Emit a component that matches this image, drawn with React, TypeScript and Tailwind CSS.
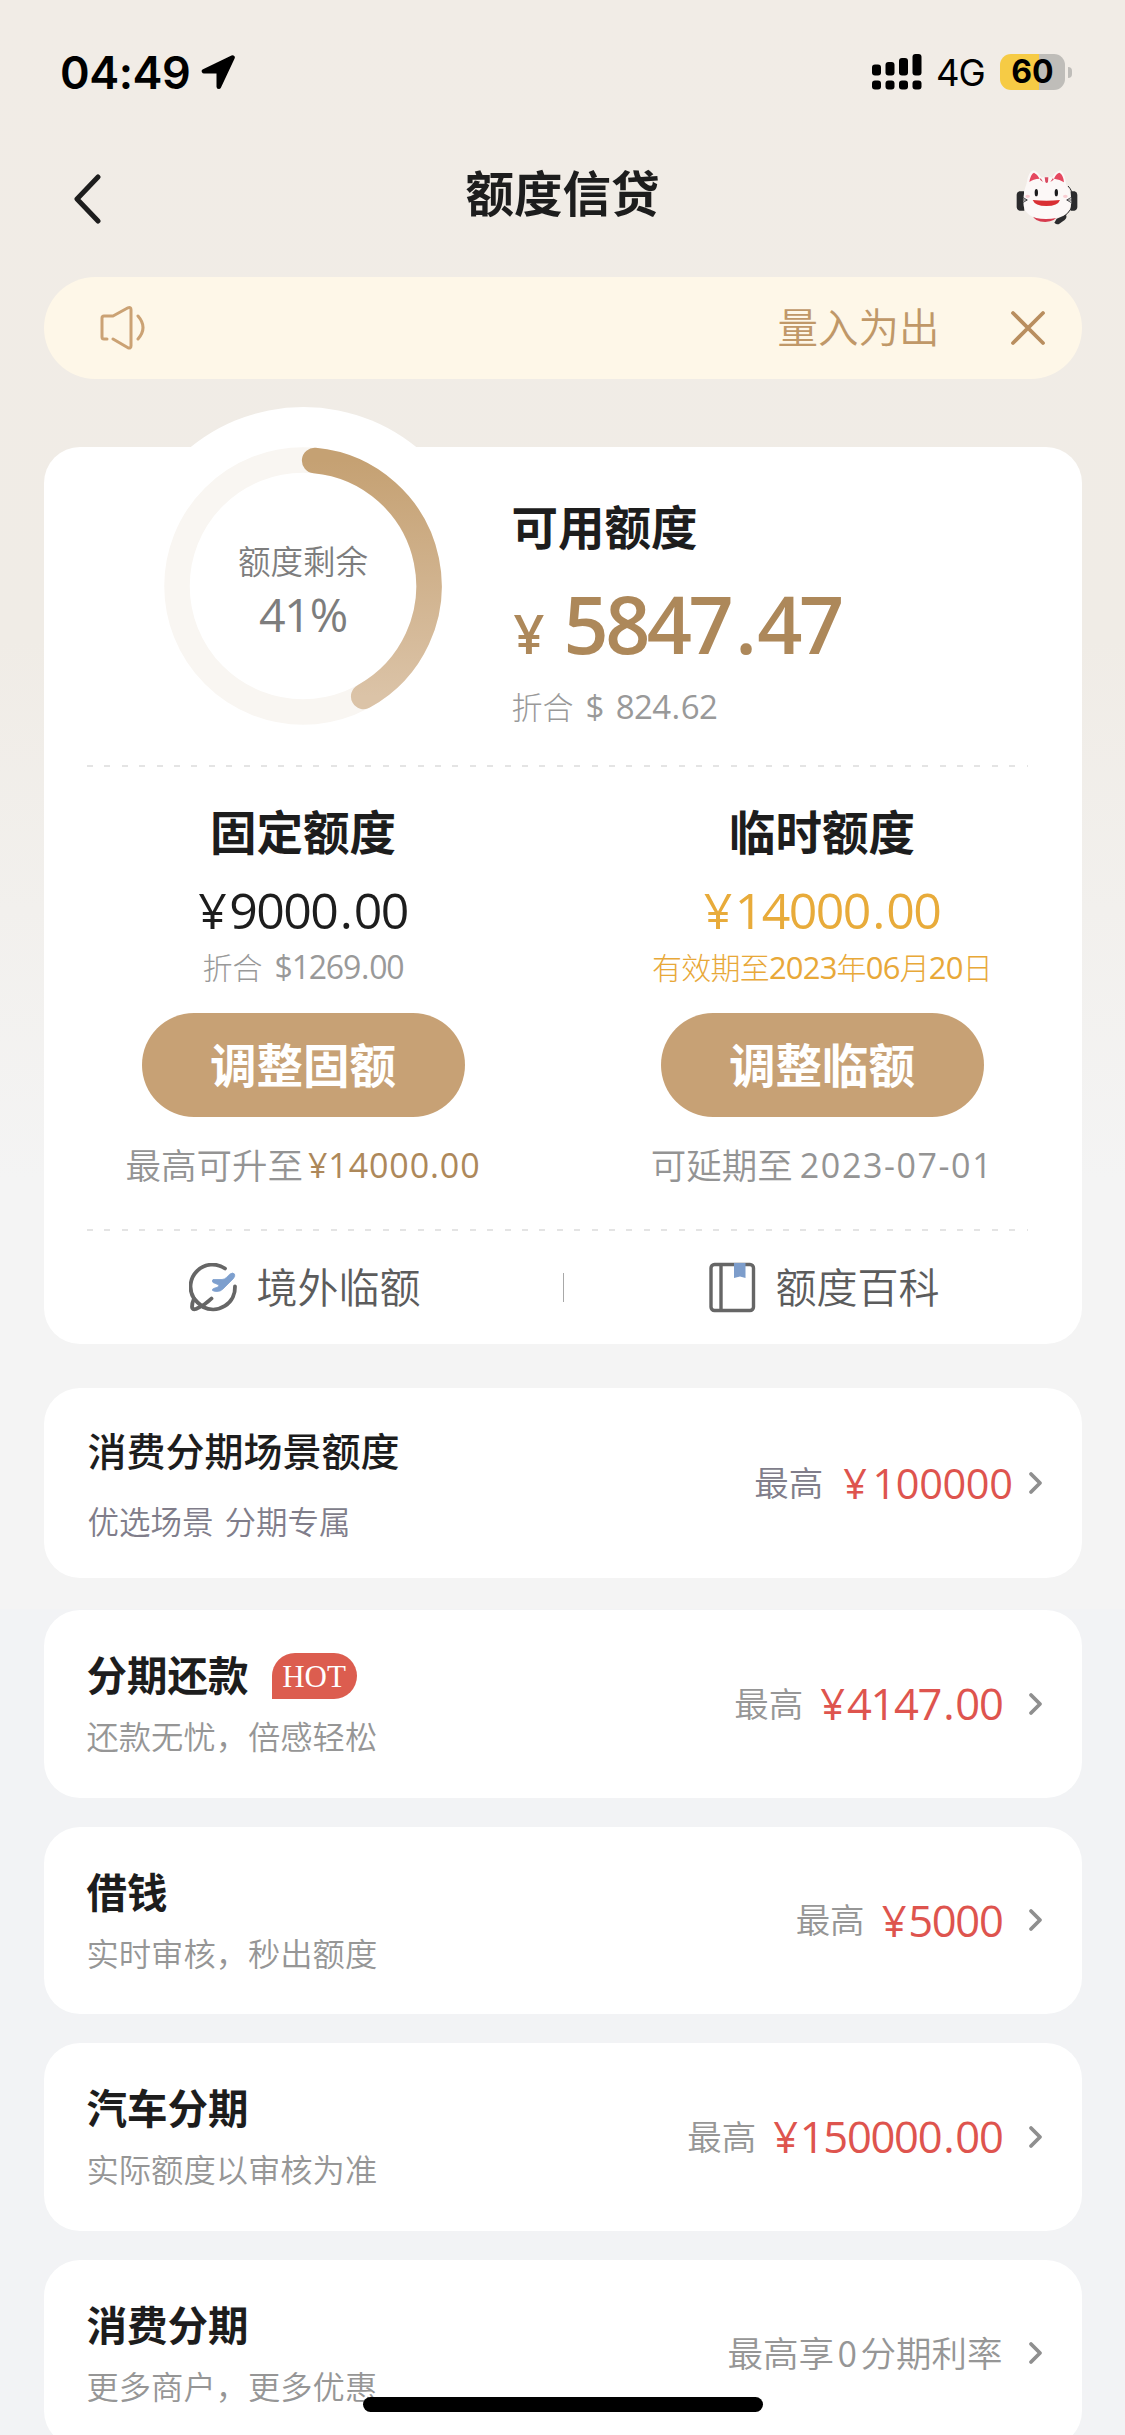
import type { ReactNode } from "react";
import clsx from "clsx";

interface Offer {
  title: string;
  desc: string;
  hot?: boolean;
  amount?: string;
  note?: ReactNode;
}

const offers: Offer[] = [
  { title: "分期还款", desc: "还款无忧，倍感轻松", hot: true, amount: "¥4147.00" },
  { title: "借钱", desc: "实时审核，秒出额度", amount: "¥5000" },
  { title: "汽车分期", desc: "实际额度以审核为准", amount: "¥150000.00" },
  {
    title: "消费分期",
    desc: "更多商户，更多优惠",
    note: (
      <>
        最高享<span className="mx-[3.5px]">0</span>分期利率
      </>
    ),
  },
];

// Ring geometry: progress is drawn clockwise from the top with rounded ends
const RING_R = 126;
const START_DEG = 5.3;
const END_DEG = 151.2;

function ringPoint(deg: number) {
  const rad = (deg * Math.PI) / 180;
  return `${139 + RING_R * Math.sin(rad)} ${139 - RING_R * Math.cos(rad)}`;
}

interface FiguresProps {
  value: string;
  className?: string;
  // spacing round the decimal point and after the currency sign
  dot?: string;
  sign?: string;
}

function Figures({ value, className, dot, sign }: FiguresProps) {
  const symbol = /^[¥$]/.test(value) ? value[0] : "";
  const [whole, cents] = value.slice(symbol.length).split(".");
  return (
    <span className={clsx("font-['Open_Sans','Noto_Sans_CJK_SC',sans-serif] whitespace-nowrap", className)}>
      {symbol && <span className={sign}>{symbol}</span>}
      {whole}
      {cents && <span className={dot}>.</span>}
      {cents}
    </span>
  );
}

function StatusBar() {
  return (
    <div className="flex h-[144px] items-center justify-between pl-[60px] pr-[53px] font-['Inter',sans-serif] text-black">
      <div className="flex items-center gap-[11px]">
        <span className="text-[45px] font-semibold leading-none tracking-[-0.5px]">04:49</span>
        <svg className="h-[35px] w-[35px]" viewBox="0 0 35 35">
          <path
            d="M31.5 2.5 3 16.2h14.8v15.6z"
            fill="#000"
            stroke="#000"
            strokeWidth="4.6"
            strokeLinejoin="round"
          />
        </svg>
      </div>
      <div className="flex items-center">
        <svg className="h-[36px] w-[50px]" viewBox="0 0 50 36">
          <rect x="0" y="10.5" width="9" height="11" rx="3" />
          <rect x="13.5" y="8" width="9" height="13.5" rx="3" />
          <rect x="27" y="4" width="9" height="17.5" rx="3" />
          <rect x="40.5" y="0" width="9" height="21.5" rx="3" />
          <rect x="0" y="26.5" width="9" height="9" rx="3" />
          <rect x="13.5" y="26.5" width="9" height="9" rx="3" />
          <rect x="27" y="26.5" width="9" height="9" rx="3" />
          <rect x="40.5" y="26.5" width="9" height="9" rx="3" />
        </svg>
        <span className="ml-[14px] w-[64px] pt-[2px] text-[36.5px] leading-none tracking-[-1px]">4G</span>
        <div className="flex h-[36px] w-[65px] items-center justify-center rounded-[11px] bg-[linear-gradient(90deg,#f6cb45_60%,#bfbdb9_60%)]">
          <span className="text-[32px] font-bold leading-none">60</span>
        </div>
        <div className="ml-[3px] h-[11px] w-[4px] rounded-r-full bg-[#bfbdb9]" />
      </div>
    </div>
  );
}

function CatAvatar() {
  return (
    <svg className="mt-[4px] h-[55px] w-[62px]" viewBox="48 60 186 165">
      <path d="M72 124H58q-8 3-8 10v38q1 9 9 10h14zM212 124h12q8 3 8 10v38q-1 9-9 10h-11z" fill="#2b2b2d" />
      <path d="M98 196h74q-4 18-36 20-34-1-38-20" fill="#d63b4e" />
      <path
        d="M80 100Q84 66 100 61q14 4 24 22 16-5 33 0 8-18 24-22 14 8 17 42 18 26 16 56-6 48-76 48-68 0-68-50 0-32 10-57"
        fill="#fcf8f7"
      />
      <path d="M88 96q4-24 14-28 12 6 17 18-20 1-31 10M162 86q6-15 16-18 12 6 14 29-12-9-30-11" fill="#e5485f" />
      <path d="M134 82h11l-1 14q-4 6-8 0zM122 84l7 12-9-7zM159 84l-8 12 10-7z" fill="#d94a60" />
      <ellipse cx="109" cy="128" rx="5" ry="11" fill="#1b1b1d" />
      <ellipse cx="169" cy="128" rx="5" ry="11" fill="#1b1b1d" />
      <ellipse cx="83" cy="139" rx="7" ry="5" fill="#f9cdd2" />
      <ellipse cx="196" cy="139" rx="7" ry="5" fill="#f9cdd2" />
      <path d="M98 150q42 5 82 0-6 18-41 18-34 0-41-18" fill="#d92f33" />
      <path d="m68 142 14 8-14 8M66 150h15M214 142l-14 8 14 8M216 150h-15" fill="none" stroke="#3a3a3c" strokeWidth="2.5" />
      <path d="M204 108q14 14 16 38 1 34-32 56" fill="none" stroke="#2b2b2d" strokeWidth="3" />
      <path d="m170 206 28-12q4 8-4 16l-18 13q-12 0-12-6z" fill="#2b2b2d" />
    </svg>
  );
}

function Chevron() {
  return (
    <svg className="h-[24px] w-[16px] shrink-0" viewBox="0 0 16 24">
      <path d="m3 3 9 9-9 9" fill="none" stroke="#8f8f8f" strokeWidth="3.8" strokeLinecap="round" strokeLinejoin="round" />
    </svg>
  );
}

function NoticeBar() {
  return (
    <div className="mx-[43.5px] flex h-[102px] items-center rounded-full bg-[#fef7e8] pl-[56px] pr-[36px] text-[#c09868]">
      <svg className="h-[44px] w-[48px]" viewBox="0 0 48 44" fill="none" stroke="#cba274" strokeWidth="3" strokeLinecap="round" strokeLinejoin="round">
        <path d="M7 33H4q-2 0-2-2V12q0-2 2-2h9L28 1.800q3-1 3 2v36q0 3-3 2L13 33" />
        <path d="M38 10q10 11.500 0 23" />
      </svg>
      <span className="ml-auto pb-[3px] text-[40.500px] font-[350] leading-none">量入为出</span>
      <svg className="ml-[70px] h-[36px] w-[36px]" viewBox="0 0 36 36">
        <path d="m3 3 30 30M33 3 3 33" stroke="#b98e5f" strokeWidth="3.8" strokeLinecap="round" />
      </svg>
    </div>
  );
}

function QuotaRing() {
  return (
    <div className="-mt-[40px] flex h-[357px] w-[357px] items-center justify-center rounded-full bg-white">
      <div className="relative flex h-[278px] w-[278px] flex-col items-center pt-[96px]">
        <svg className="absolute inset-0" viewBox="0 0 278 278" fill="none" strokeWidth="25.5">
          <defs>
            <linearGradient id="quota" x1="0" y1="0" x2="0" y2="1">
              <stop offset="0" stopColor="#c5a173" />
              <stop offset="1" stopColor="#dbc3a7" />
            </linearGradient>
          </defs>
          <circle cx="139" cy="139" r={RING_R} stroke="#f9f6f2" />
          <path
            d={`M${ringPoint(START_DEG)} A${RING_R} ${RING_R} 0 0 1 ${ringPoint(END_DEG)}`}
            stroke="url(#quota)"
            strokeLinecap="round"
          />
        </svg>
        <span className="text-[32.5px] font-[350] leading-[34px] text-[#7d7d7d]">额度剩余</span>
        <span className="mt-[14px] font-['Open_Sans',sans-serif] text-[46.5px] leading-[46px] tracking-[-1.2px] text-[#7d7d7d]">
          41%
        </span>
      </div>
    </div>
  );
}

function Dashes() {
  return (
    <div className="ml-[43px] h-[2px] w-[941px] bg-[repeating-linear-gradient(90deg,#e4e4e4_0_6px,transparent_6px_17.4px)]" />
  );
}

function QuotaColumn({ title, action, children, note }: { title: string; action: string; children: ReactNode; note: ReactNode }) {
  return (
    <div className="flex w-1/2 flex-col items-center">
      <h2 className="mb-[34px] mt-[40px] text-[46.5px] font-bold leading-[46px] text-[#1d1d1d]">{title}</h2>
      {children}
      <button className="mt-[31px] h-[104px] w-[323px] rounded-full bg-[#c7a175] pb-[4px] text-[46.5px] font-bold leading-none text-white">
        {action}
      </button>
      <div className="mt-[28px] flex h-[40px] items-center text-[35.5px] font-[350] leading-none text-[#949494]">{note}</div>
    </div>
  );
}

function QuotaCard() {
  return (
    <section className="mx-[43.5px] mt-[68.5px] h-[897px] rounded-[36px] bg-white">
      <div className="flex h-[318px]">
        <div className="w-[468px] pl-[81px]">
          <QuotaRing />
        </div>
        <div className="flex flex-col items-start">
          <h2 className="mt-[55px] text-[46.5px] font-bold leading-[46px] text-[#1d1d1d]">可用额度</h2>
          <div className="mt-[36px] flex h-[80px] items-baseline text-[#ad885a]">
            <span className="ml-[2px] w-[50px] font-['Open_Sans',sans-serif] text-[54px] font-semibold leading-[80px]">¥</span>
            <Figures value="5847.47" className="text-[79px] font-semibold leading-[80px] tracking-[-3.500px]" dot="ml-[5px] mr-[4px]" />
          </div>
          <div className="mt-[25px] flex h-[34px] items-center text-[31px] font-light leading-none text-[#999]">
            <span className="pb-[2px]">折合</span>
            <Figures value="$824.62" className="ml-[12px] text-[33px] font-normal tracking-[-0.6px]" dot="mx-[1px]" sign="mr-[12px]" />
          </div>
        </div>
      </div>
      <Dashes />
      <div className="flex h-[462px]">
        <QuotaColumn
          title="固定额度"
          action="调整固额"
          note={
            <>
              <span className="pb-[2px]">最高可升至</span>
              <Figures value="¥14000.00" className="ml-[5px] text-[34px] font-normal tracking-[0.900px] text-[#ad885a]" />
            </>
          }
        >
          <Figures
            value="¥9000.00"
            className="text-[50px] leading-[46px] tracking-[-1.6px] text-[#1d1d1d]"
            dot="mx-[2.5px]"
            sign="mr-[4px]"
          />
          <div className="mt-[19px] flex h-[30px] items-center text-[30px] font-light leading-none text-[#999]">
            <span className="pb-[2px]">折合</span>
            <Figures value="$1269.00" className="ml-[12px] text-[32px] font-normal tracking-[-1.2px]" dot="mx-[1px]" />
          </div>
        </QuotaColumn>
        <QuotaColumn
          title="临时额度"
          action="调整临额"
          note={
            <>
              <span className="pb-[2px]">可延期至</span>
              <span className="ml-[7px] font-['Open_Sans',sans-serif] text-[34px] font-normal tracking-[1.600px]">2023-07-01</span>
            </>
          }
        >
          <Figures
            value="¥14000.00"
            className="text-[50px] leading-[46px] tracking-[-1.6px] text-[#e8ab3a]"
            dot="mx-[2.5px]"
            sign="mr-[4px]"
          />
          <div className="mt-[19px] flex h-[30px] items-center font-light leading-none tracking-[-0.8px] text-[#e8a838]">
            <p className="text-[30px] leading-[30px]">
              有效期至
              <Figures value="2023" className="text-[31px] font-normal leading-none" />年
              <Figures value="06" className="text-[31px] font-normal leading-none" />月
              <Figures value="20" className="text-[31px] font-normal leading-none" />日
            </p>
          </div>
        </QuotaColumn>
      </div>
      <Dashes />
      <div className="flex h-[113px] items-center text-[41px] font-[350] leading-none text-[#5c5c5c]">
        <div className="flex w-[519px] items-center pl-[145px]">
          <svg className="h-[50px] w-[50px]" viewBox="0 0 50 50" fill="none" stroke="#666" strokeWidth="3.8" strokeLinecap="round" strokeLinejoin="round">
            <path d="M36 5.5A22 22 0 0 0 5 35.5Q3 40 3 44q0 3 4 2 9-4 15.5-10.500" />
            <path d="M5 35.5q3 4 9 8.5A22 22 0 0 0 46 23.5" />
            <path
              d="M41 11q3-2 4.500 0 1 2-1 4.500L34 26q-2.500 2.500-6 2.500-3 0-4.500-1-.5-1.500 1-2l4.500-1.500 1-2-6-2.500q-1.500-1.500 0-3h9q2.500 0 4.500-2z"
              fill="#7d9fce"
              stroke="#7d9fce"
              strokeWidth="0.8"
            />
          </svg>
          <span className="ml-[18px] pb-[5px]">境外临额</span>
        </div>
        <div className="h-[29px] w-px bg-[#a8a8a8]" />
        <div className="flex items-center pl-[145px]">
          <svg className="h-[51px] w-[47px]" viewBox="0 0 47 51" fill="none" stroke="#666" strokeWidth="3.4">
            <rect x="2" y="2.5" width="42.5" height="46" rx="3.5" />
            <path d="M12 2.5v46" />
            <path d="M25 1h11.500v15L31 14.500 25 16z" fill="#7d9dcb" stroke="none" />
          </svg>
          <span className="ml-[20px] pb-[5px]">额度百科</span>
        </div>
      </div>
    </section>
  );
}

function SceneCard() {
  return (
    <section className="mx-[43.5px] mt-[44px] flex h-[190px] items-center rounded-[36px] bg-white pl-[44px] pr-[38px] text-[#807d8a]">
      <div className="flex-1">
        <h3 className="text-[39px] font-medium leading-[40px] text-[#1d1d1d]">消费分期场景额度</h3>
        <p className="mt-[34px] text-[31.5px] font-[350] leading-[34px]">
          优选场景<span className="ml-[11px]">分期专属</span>
        </p>
      </div>
      <span className="pb-[2px] text-[34.5px] font-[350]">最高</span>
      <Figures
        value="¥100000"
        className="ml-[20px] mr-[15px] text-[41.5px] tracking-[-0.4px] text-[#de544e]"
        sign="mr-[6px]"
      />
      <Chevron />
    </section>
  );
}

function OfferCard({ offer }: { offer: Offer }) {
  return (
    <section className="flex h-[187.5px] shrink-0 items-center rounded-[36px] bg-white pl-[43px] pr-[38px] text-[#969696]">
      <div className="flex-1 pb-[2px]">
        <div className="flex h-[46px] items-center">
          <h3 className="pb-[4px] text-[40.5px] font-bold leading-none text-[#1d1d1d]">{offer.title}</h3>
          {offer.hot && (
            <span className="ml-[23px] flex h-[46px] w-[85px] items-center justify-center rounded-[23px] rounded-bl-none bg-[#dc5d4f] font-['Liberation_Serif',serif] text-[31px] leading-none text-white">
              HOT
            </span>
          )}
        </div>
        <p className="mt-[19px] text-[32.3px] font-[350] leading-[34px]">{offer.desc}</p>
      </div>
      {offer.amount ? (
        <>
          <span className="pb-[2px] text-[34.5px] font-[350]">最高</span>
          <Figures
            value={offer.amount}
            className="ml-[17px] text-[43.5px] tracking-[-1.3px] text-[#de544e]"
            dot="mx-[2px]"
            sign="mr-[3px]"
          />
        </>
      ) : (
        <span className="pb-[3px] text-[35.500px] font-[350]">{offer.note}</span>
      )}
      <div className="ml-[25px] flex">
        <Chevron />
      </div>
    </section>
  );
}

export default function App() {
  return (
    <div className="relative h-[2435px] w-[1125px] overflow-hidden bg-[#f2f3f5] font-['Noto_Sans_CJK_SC',sans-serif]">
      <div className="h-[1609px] bg-[linear-gradient(180deg,#f1ece6_0,#f0ece6_640px,#f4f4f4_1180px)]">
        <StatusBar />
        <header className="flex h-[132.5px] items-start justify-between pl-[74px] pr-[47px] pt-[22px]">
          <svg className="mt-[8px] h-[50px] w-[28px]" viewBox="0 0 28 50">
            <path d="M24 3 3 25l21 22" fill="none" stroke="#1d1d1d" strokeWidth="5" strokeLinecap="round" strokeLinejoin="round" />
          </svg>
          <h1 className="ml-[7px] text-[48.5px] font-bold leading-[50px] text-[#1d1d1d]">额度信贷</h1>
          <CatAvatar />
        </header>
        <NoticeBar />
        <QuotaCard />
        <SceneCard />
      </div>
      <main className="mx-[43.5px] mt-px flex flex-col gap-[29px]">
        {offers.map((offer) => (
          <OfferCard key={offer.title} offer={offer} />
        ))}
      </main>
      {/* Home indicator floats over the list */}
      <div className="absolute bottom-[23px] left-[363px] h-[15px] w-[400px] rounded-full bg-black" />
    </div>
  );
}
